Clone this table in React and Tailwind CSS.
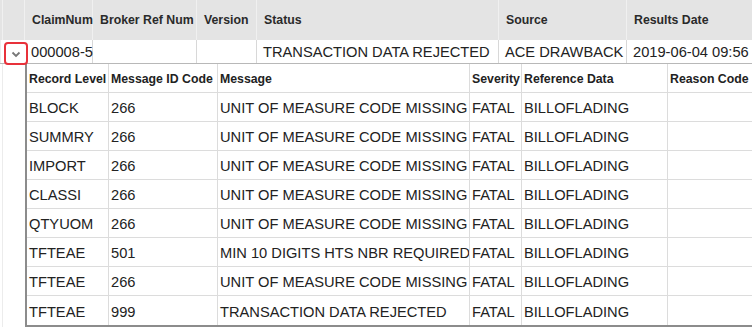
import React from "react";

const mainCols = [
  { label: "ClaimNum", w: "w-[68px]", v: "000008-5" },
  { label: "Broker Ref Num", w: "w-[104px]", v: "" },
  { label: "Version", w: "w-[60px]", v: "" },
  { label: "Status", w: "w-[242px]", v: "TRANSACTION DATA REJECTED" },
  { label: "Source", w: "w-[128px]", v: "ACE DRAWBACK" },
  { label: "Results Date", w: "w-[140px]", v: "2019-06-04 09:56" },
];

const subCols = [
  { label: "Record Level", w: "w-[82px]" },
  { label: "Message ID Code", w: "w-[109px]" },
  { label: "Message", w: "w-[252px]" },
  { label: "Severity", w: "w-[52px]" },
  { label: "Reference Data", w: "w-[146px]" },
  { label: "Reason Code", w: "w-[100px]" },
];

const rows = [
  ["BLOCK", "266", "UNIT OF MEASURE CODE MISSING"],
  ["SUMMRY", "266", "UNIT OF MEASURE CODE MISSING"],
  ["IMPORT", "266", "UNIT OF MEASURE CODE MISSING"],
  ["CLASSI", "266", "UNIT OF MEASURE CODE MISSING"],
  ["QTYUOM", "266", "UNIT OF MEASURE CODE MISSING"],
  ["TFTEAE", "501", "MIN 10 DIGITS HTS NBR REQUIRED"],
  ["TFTEAE", "266", "UNIT OF MEASURE CODE MISSING"],
  ["TFTEAE", "999", "TRANSACTION DATA REJECTED"],
];

export default function App() {
  return (
    <div
      className="w-[752px] h-[329px] overflow-hidden bg-white text-[#222]"
      style={{ fontFamily: '"Liberation Sans", Arial, sans-serif' }}
    >
      {/* header */}
      <div className="flex h-[40px] bg-[#e4e4e4] whitespace-nowrap">
        <div className="w-[23px] shrink-0 border-l border-r border-[#f0f0f0] ml-[2px]" />
        {mainCols.map((c) => (
          <div
            key={c.label}
            className={`${c.w} shrink-0 flex items-center pl-[7px] pt-[1px] border-r border-[#f0f0f0] text-[12.3px] font-bold text-[#2a2a2a]`}
          >
            {c.label}
          </div>
        ))}
      </div>
      {/* main row */}
      <div className="flex h-[24px] border-b border-[#b8b8b8] whitespace-nowrap">
        <div className="w-[25px] shrink-0 relative border-l border-[#ececec] ml-0">
          <div className="absolute left-[3px] top-[2px] w-[24px] h-[23px] border-2 border-[#e8313a] rounded-[4px] flex items-center justify-center bg-white z-10">
            <svg width="10" height="7" viewBox="0 0 10 7" className="mt-[2px]">
              <path d="M1.5 1.5 L5 5 L8.5 1.5" fill="none" stroke="#777" strokeWidth="1.8" />
            </svg>
          </div>
        </div>
        {mainCols.map((c, i) => (
          <div
            key={c.label}
            className={`${c.w} shrink-0 flex items-center pl-[6px] pt-[1px] ${i < 5 ? "border-r border-[#d8d8d8]" : ""} text-[14.67px]`}
          >
            {c.v}
          </div>
        ))}
      </div>
      {/* nested */}
      <div className="flex">
        <div className="w-[25px] shrink-0 border-l border-[#ececec] ml-[2px]" />
        <div className="flex-1 -ml-[2px] border-l-2 border-b-2 border-[#8c8c8c] whitespace-nowrap">
          <div className="flex h-[29px] border-b border-[#dcdcdc]">
            {subCols.map((c, i) => (
              <div
                key={c.label}
                className={`${c.w} shrink-0 flex items-center pl-[2px] pt-[2px] ${i < 5 ? "border-r border-[#dcdcdc]" : ""} text-[12.3px] font-bold text-[#222]`}
              >
                {c.label}
              </div>
            ))}
          </div>
          {rows.map((r, ri) => (
            <div
              key={ri}
              className={`flex h-[29px] ${ri < rows.length - 1 ? "border-b border-[#dcdcdc]" : ""}`}
            >
              {[r[0], r[1], r[2], "FATAL", "BILLOFLADING", ""].map((v, i) => (
                <div
                  key={i}
                  className={`${subCols[i].w} shrink-0 flex items-center pl-[2px] pt-[2px] ${i < 5 ? "border-r border-[#dcdcdc]" : ""} text-[14.67px] overflow-hidden`}
                >
                  {v}
                </div>
              ))}
            </div>
          ))}
        </div>
      </div>
    </div>
  );
}
